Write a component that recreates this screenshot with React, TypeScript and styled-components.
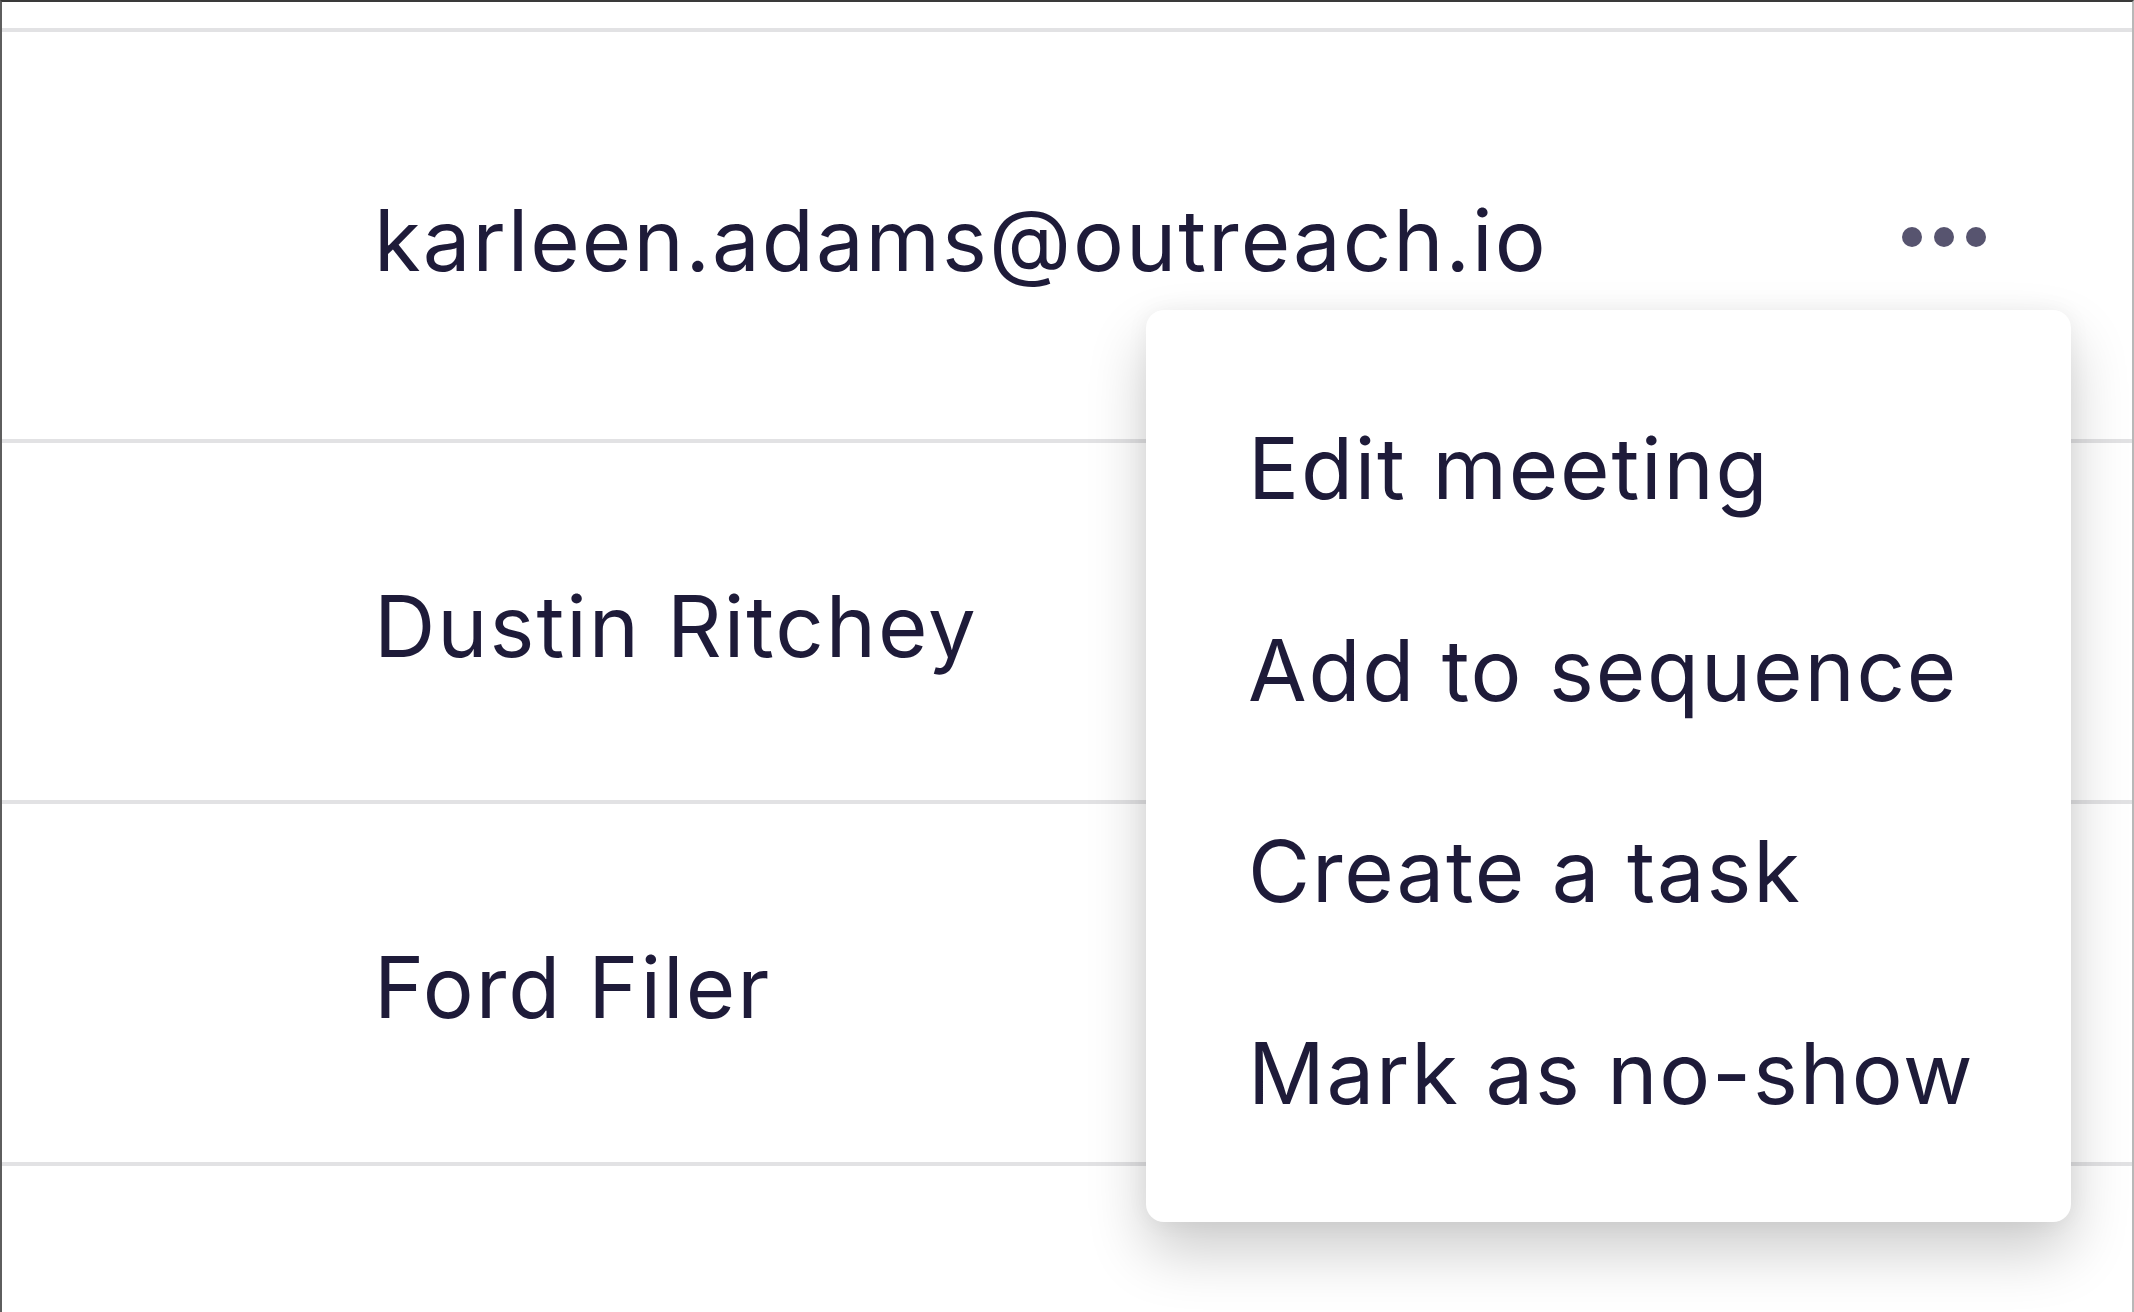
import React from "react";
import styled, { createGlobalStyle } from "styled-components";

const Global = createGlobalStyle`
  html, body { margin: 0; padding: 0; background: #ffffff; }
  * { box-sizing: border-box; }
`;

const Frame = styled.div`
  position: relative;
  width: 2134px;
  height: 1312px;
  overflow: hidden;
  background: #ffffff;
  border-top: 2px solid #3a3a3a;
  border-left: 2px solid #5e5e5e;
  border-right: 2px solid #b8b8b8;
  font-family: Inter, "Noto Sans", sans-serif;
  color: #1e1b39;
`;

const HeaderStrip = styled.div`
  height: 30px;
  border-bottom: 4px solid #e2e2e4;
`;

const Row = styled.div<{ $h: number }>`
  position: relative;
  height: ${(p) => p.$h}px;
  border-bottom: 4px solid #e2e2e4;
  display: flex;
  align-items: center;
  justify-content: space-between;
  padding: 0 146px 0 372px;
`;

const CellText = styled.span`
  padding-top: 9px;
  font-size: 85px;
  line-height: 1;
  letter-spacing: 2px;
  white-space: nowrap;
`;

const DotsButton = styled.button`
  display: flex;
  align-items: center;
  gap: 12px;
  padding: 2px 0 0;
  border: none;
  background: transparent;
`;

const Dot = styled.span`
  width: 20px;
  height: 20px;
  border-radius: 50%;
  background: #57546f;
`;

const Menu = styled.ul`
  position: absolute;
  z-index: 2;
  left: 1144px;
  top: 278px;
  width: 925px;
  margin: 0;
  padding: 58px 0 48px;
  list-style: none;
  background: #ffffff;
  border-radius: 18px;
  box-shadow: 0 30px 60px rgba(0, 0, 0, 0.2), 0 0 22px rgba(0, 0, 0, 0.05);
`;

const MenuItem = styled.li`
  height: 201.5px;
  display: flex;
  align-items: center;
  padding-left: 102px;
  font-size: 85px;
  line-height: 1;
  letter-spacing: 1.8px;
  white-space: nowrap;
`;

const rows = [
  { h: 411, text: "karleen.adams@outreach.io", menu: true },
  { h: 361, text: "Dustin Ritchey" },
  { h: 362, text: "Ford Filer" },
  { h: 362, text: "Alan Pritchard" },
];

const menuItems = ["Edit meeting", "Add to sequence", "Create a task", "Mark as no-show"];

export default function App() {
  return (
    <>
      <Global />
      <Frame>
        <HeaderStrip />
        {rows.map((r) => (
          <Row key={r.text} $h={r.h}>
            <CellText>{r.text}</CellText>
            {r.menu && (
              <>
                <DotsButton aria-label="More actions">
                  <Dot />
                  <Dot />
                  <Dot />
                </DotsButton>
                <Menu>
                  {menuItems.map((m) => (
                    <MenuItem key={m}>{m}</MenuItem>
                  ))}
                </Menu>
              </>
            )}
          </Row>
        ))}
      </Frame>
    </>
  );
}
